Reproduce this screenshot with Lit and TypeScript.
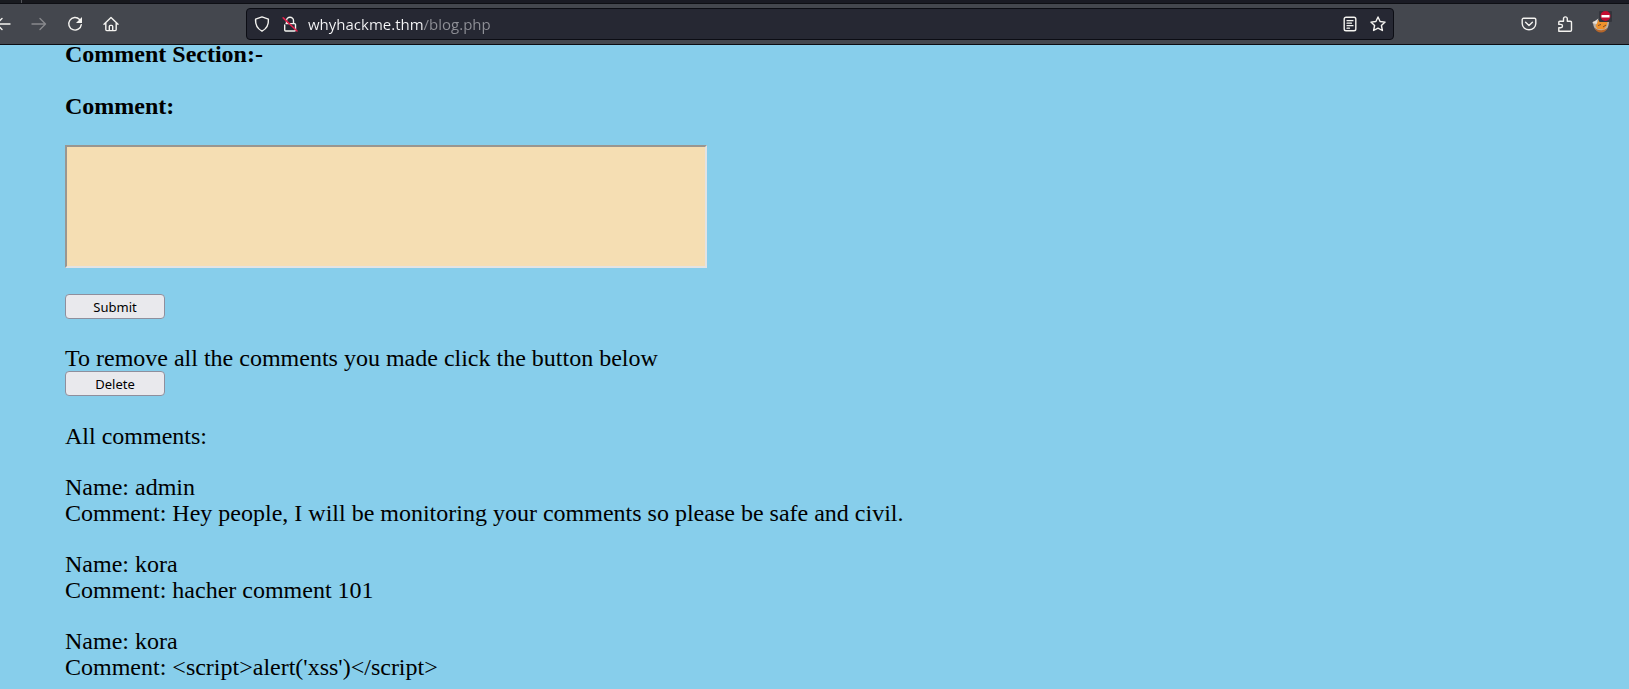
import { LitElement, html, css, svg } from "lit";
import { customElement, property, state } from "lit/decorators.js";

interface BlogComment {
  name: string;
  text: string;
}

const icons = {
  back: svg`<path d="M1.5 8H15M7 2.5 1.5 8 7 13.5" />`,
  forward: svg`<path d="M1 8H14.5M9 2.5 14.5 8 9 13.5" />`,
  reload: svg`<path d="M12.6 3.4A6.3 6.3 0 1 0 14.3 8.6" /><path d="M15 1v6H9z" fill="currentColor" stroke="none" />`,
  home: svg`<path d="M1 8.2 8 1.4l7 6.8M2.8 7v6.6a1 1 0 0 0 1 1h8.4a1 1 0 0 0 1-1V7M6.3 14.4v-4a1 1 0 0 1 1-1h1.4a1 1 0 0 1 1 1v4" />`,
  shield: svg`<path d="M8 .9 1.6 3.1C1.2 8.800 3.100 12.600 8 15.200c4.900-2.600 6.800-6.400 6.400-12.100z" />`,
  lock: svg`<path d="M4.500 7.500V4.800a3.500 3.500 0 0 1 7 0v2.700M2.700 9v5a1 1 0 0 0 1 1h8.800a1 1 0 0 0 1-1V8.600a1 1 0 0 0-1-1H4" /><path d="M1.200 1.800 15 15" stroke="#e2214b" stroke-width="1.600" />`,
  reader: svg`<rect x="2.200" y="1.200" width="11.600" height="13.600" rx="1.800" /><path d="M5 4.700h6M5 7.200h4.500M5 9.700h6M5 12.200h2.500" stroke-width="1.200" />`,
  star: svg`<path d="m8 1 2.100 4.500 5 .6-3.700 3.400 1 5L8 12.100l-4.400 2.400 1-5L.9 6.100l5-.6z" />`,
  pocket: svg`<path d="M2.500 2.300h11a1.300 1.300 0 0 1 1.300 1.300v3.900a6.800 6.300 0 0 1-13.600 0V3.600a1.300 1.300 0 0 1 1.300-1.300z" /><path d="M4.600 6.300 8 9.500l3.400-3.200" />`,
  puzzle: svg`<path d="M1.800 15.200h11.500a1.200 1.200 0 0 0 1.200-1.200V6.400a1.200 1.200 0 0 0-1.200-1.200h-3V2.800a1.900 1.900 0 0 0-3.800 0v2.400H2.800a1 1 0 0 0-1 1v2.200h2a1.700 1.700 0 0 1 0 3.400h-2z" />`,
};

@customElement("tool-button")
class ToolButton extends LitElement {
  @property() icon: keyof typeof icons = "home";
  @property() label = "";
  @property({ type: Boolean }) disabled = false;

  static styles = css`
    :host {
      display: flex;
    }
    .button {
      display: flex;
      align-items: center;
      justify-content: center;
      width: 100%;
      height: 32px;
      padding: 0;
      border: 0;
      border-radius: 4px;
      background: none;
      color: #f4f3f0;
    }
    .button:disabled {
      color: #88898d;
    }
    .glyph {
      width: 16px;
      height: 16px;
      flex: none;
      fill: none;
      stroke: currentColor;
      stroke-width: 1.4;
      stroke-linecap: round;
      stroke-linejoin: round;
    }
  `;

  render() {
    return html`<button class="button" type="button" aria-label=${this.label} ?disabled=${this.disabled}>
      <svg class="glyph" viewBox="0 0 16 16">${icons[this.icon]}</svg>
    </button>`;
  }
}

@customElement("browser-bar")
class BrowserBar extends LitElement {
  static styles = css`
    :host {
      display: block;
      position: relative;
      z-index: 1;
    }
    .tabs {
      height: 4px;
      box-sizing: border-box;
      border-bottom: 1px solid #0e0f14;
      background: linear-gradient(90deg, #191b20 21px, #55565c 21px 22px, #17181d 22px 130px, #1a1b24 130px);
    }
    .bar {
      display: grid;
      grid-template-columns: 246px 1fr 235px;
      align-items: center;
      height: 40px;
      border-bottom: 1px solid #0c0d12;
      background: #44474e;
    }
    .nav {
      display: flex;
      margin-left: -15px;
    }
    .nav tool-button {
      width: 36px;
    }
    .address {
      display: flex;
      align-items: center;
      height: 32px;
      box-sizing: border-box;
      padding: 0 1px;
      border: 1px solid #0c0d14;
      border-radius: 4px;
      background: #262833;
    }
    .address tool-button {
      width: 28px;
    }
    .url {
      flex: 1;
      min-width: 0;
      height: 28px;
      margin-left: 4px;
      padding: 0;
      border: 0;
      outline: 0;
      font: 15px "Open Sans", "Noto Sans", sans-serif;
      color: transparent;
      background: linear-gradient(90deg, #f7f7f9 115px, #8f9097 115px);
      background-clip: text;
      -webkit-background-clip: text;
    }
    .tools {
      display: flex;
      justify-content: flex-end;
      padding-right: 8px;
    }
    .tools tool-button {
      width: 36px;
    }
    .extension {
      display: flex;
      justify-content: center;
      align-items: center;
      width: 38px;
      height: 32px;
      padding: 0;
      border: 0;
      background: none;
    }
    .fox {
      width: 22px;
      height: 28px;
      flex: none;
    }
  `;

  render() {
    return html`
      <div class="tabs"></div>
      <div class="bar">
        <nav class="nav">
          <tool-button icon="back" label="Back"></tool-button>
          <tool-button icon="forward" label="Forward" disabled></tool-button>
          <tool-button icon="reload" label="Reload"></tool-button>
          <tool-button icon="home" label="Home"></tool-button>
        </nav>
        <div class="address">
          <tool-button icon="shield" label="Tracking protection"></tool-button>
          <tool-button icon="lock" label="Connection not secure"></tool-button>
          <input class="url" type="text" aria-label="Address" spellcheck="false" value="whyhackme.thm/blog.php" />
          <tool-button icon="reader" label="Reader view"></tool-button>
          <tool-button icon="star" label="Bookmark"></tool-button>
        </div>
        <div class="tools">
          <tool-button icon="pocket" label="Pocket"></tool-button>
          <tool-button icon="puzzle" label="Extensions"></tool-button>
          <button class="extension" type="button" aria-label="Proxy extension">
            <svg class="fox" viewBox="0 0 22 28">
              <path d="M2 11.500C2 18 5 21.500 10 21.500S18 18 18 11z" fill="#b9b2ab" />
              <path d="M3.500 17.500c2 3 10 4 13 0-1 3.500-3.500 5-6.500 5s-5.500-1.500-6.500-5z" fill="#b5662a" />
              <path d="M4.500 16l3-6 9 1.500-.5 4-3 4-6.500-.5z" fill="#f0922b" />
              <path d="M1 13 7.500 8.500 5.500 14z" fill="#e7dfd6" />
              <path d="m7 15.500 3-1m2 2.500 3-2" stroke="#7a4a28" fill="none" />
              <rect x="8" y="1" width="13" height="11" rx="1" fill="#33353c" />
              <circle cx="14.500" cy="6" r="5" fill="#c40d31" />
              <path d="M10.500 5h8v2.500h-8z" fill="#fff" />
            </svg>
          </button>
        </div>
      </div>
    `;
  }
}

@customElement("app-root")
class AppRoot extends LitElement {
  @state() private comments: BlogComment[] = [
    { name: "admin", text: "Hey people, I will be monitoring your comments so please be safe and civil." },
    { name: "kora", text: "hacher comment 101" },
    { name: "kora", text: "<script>alert('xss')</script>" },
  ];

  static styles = css`
    :host {
      display: block;
      min-height: 100vh;
      overflow: hidden;
      background: #87ceeb;
      color: #000;
      font: 24px/26px "Liberation Serif", serif;
    }
    /* The page is scrolled slightly under the toolbar. */
    .page {
      display: flex;
      flex-direction: column;
      gap: 27px;
      margin-top: -4px;
      padding: 0 65px;
    }
    .form {
      display: flex;
      flex-direction: column;
      align-items: flex-start;
      gap: 26px;
    }
    .heading {
      margin: 0;
      font-size: 24px;
      font-weight: bold;
    }
    .text {
      margin: 0;
    }
    .removal {
      line-height: 25px;
    }
    .box {
      width: 642px;
      max-width: 100%;
      height: 123px;
      box-sizing: border-box;
      border: 2px solid;
      border-color: #999690 #e3e3e3 #e3e3e3 #999690;
      border-radius: 0;
      background: #f5deb3;
      resize: none;
      outline: 0;
    }
    .action {
      display: block;
      width: 100px;
      height: 25px;
      padding: 0;
      border: 1px solid #8f8f9d;
      border-radius: 4px;
      background: #e9e9ed;
      color: #000;
      font: 13px "Noto Sans", sans-serif;
    }
    .list {
      display: flex;
      flex-direction: column;
      gap: 25px;
    }
  `;

  render() {
    return html`
      <browser-bar></browser-bar>
      <main class="page">
        <form class="form" @submit=${(e: Event) => e.preventDefault()}>
          <h2 class="heading">Comment Section:-</h2>
          <label class="heading" for="comment">Comment:</label>
          <textarea class="box" id="comment"></textarea>
          <button class="action" type="submit">Submit</button>
        </form>
        <section class="removal">
          <p class="text">To remove all the comments you made click the button below</p>
          <button class="action" type="button">Delete</button>
        </section>
        <section class="list">
          <p class="text">All comments:</p>
          ${this.comments.map(
            (c) => html`<article>
              <p class="text">Name: ${c.name}</p>
              <p class="text">Comment: ${c.text}</p>
            </article>`
          )}
        </section>
      </main>
    `;
  }
}
